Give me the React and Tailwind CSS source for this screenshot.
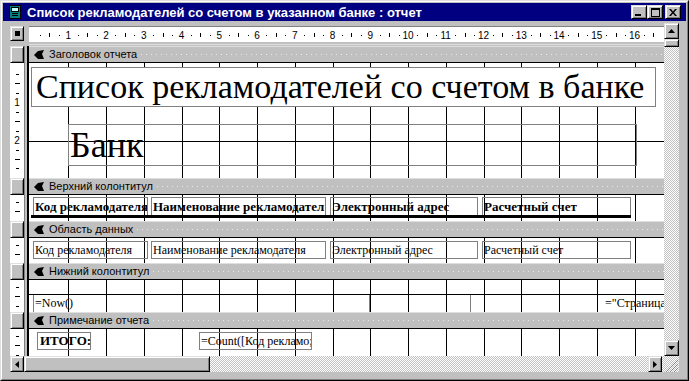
import React from "react";

// 1 cm on the design surface
const CM = 37.75;
const QUARTER = CM / 4;
const CONTENT_W = 635;
const GRID_X = Array.from({ length: 16 }, (_, i) => Math.round(39.25 + CM * i) + 0.5);

const raised =
  "bg-[#c0c0c0] border border-t-[#dfdfdf] border-l-[#dfdfdf] border-r-black border-b-black shadow-[inset_1px_1px_#fff,inset_-1px_-1px_#808080]";
const dither =
  "bg-[image:repeating-conic-gradient(#c0c0c0_0_25%,#ffffff_0_50%)] bg-[length:2px_2px]";
const serif = "font-['Liberation_Serif','Times_New_Roman',serif]";
const sans = "font-['Liberation_Sans',Arial,sans-serif]";

const TopRuler = () => {
  const marks = [];
  for (let n = 1; 1.5 + n * QUARTER < CONTENT_W - 4; n++) {
    const x = 1.5 + n * QUARTER;
    if (n % 4 === 0) {
      marks.push(
        <text key={n} x={x} y="12" fontSize="10" textAnchor="middle" fontFamily="Liberation Sans, Arial, sans-serif">
          {n / 4}
        </text>
      );
    } else if (n % 4 === 2) {
      marks.push(<rect key={n} x={Math.round(x)} y="6" width="1" height="4" fill="#000" />);
    } else {
      marks.push(<rect key={n} x={Math.round(x)} y="8" width="1" height="1" fill="#000" />);
    }
  }
  return (
    <svg width={CONTENT_W} height="15" className="block">
      {marks}
    </svg>
  );
};

const SideRuler = ({ height, offset }) => {
  const marks = [];
  for (let n = 1; offset + n * QUARTER < height - 1; n++) {
    const y = Math.round(offset + n * QUARTER);
    if (n % 4 === 0) {
      marks.push(
        <text key={n} x="7" y={y + 4} fontSize="10" textAnchor="middle" fontFamily="Liberation Sans, Arial, sans-serif">
          {n / 4}
        </text>
      );
    } else if (n % 4 === 2) {
      marks.push(<rect key={n} x="5" y={y} width="5" height="1" fill="#000" />);
    } else {
      marks.push(<rect key={n} x="6" y={y} width="3" height="1" fill="#000" />);
    }
  }
  return (
    <svg width="14" height={height} className="block">
      {marks}
    </svg>
  );
};

const Grid = ({ height, rows = [] }) => (
  <svg width={CONTENT_W} height={height} className="absolute left-0 top-0">
    {GRID_X.map((x) => (
      <line key={x} x1={x} x2={x} y1="0" y2={height} stroke="#000" />
    ))}
    {rows.map((y) => (
      <line key={y} x1="0" x2={CONTENT_W} y1={y + 0.5} y2={y + 0.5} stroke="#000" />
    ))}
  </svg>
);

const SectionIcon = () => (
  <svg width="11" height="10" viewBox="0 0 11 10" className="shrink-0">
    <polygon points="0,5 4,1 10,0 8,4 10,9 4,9" fill="#000" />
  </svg>
);

const Separator = () => (
  <div className="w-[5px] shrink-0 bg-[#c0c0c0] border-l border-l-[#808080] border-r-2 border-r-black" />
);

const SectionBar = ({ title }) => (
  <div className="flex h-[17px] shrink-0">
    <div className={`w-[14px] shrink-0 ${raised}`} />
    <Separator />
    <div className="flex flex-1 items-center gap-[4px] border-t border-t-[#dfdfdf] border-b border-b-black bg-[#c0c0c0] pl-[5px]">
      <SectionIcon />
      <span className={`${sans} text-[11px] leading-none text-black whitespace-nowrap`}>{title}</span>
      <div className="h-px flex-1 bg-[image:repeating-linear-gradient(90deg,#e8e8e8_0_1px,transparent_1px_5px)]" />
    </div>
  </div>
);

const SectionBody = ({ heightClass, height, offset, rows, children }) => (
  <div className={`flex shrink-0 ${heightClass}`}>
    <div className="w-[14px] shrink-0 bg-white">
      <SideRuler height={height} offset={offset} />
    </div>
    <Separator />
    <div className="relative flex-1 overflow-hidden bg-white">
      <Grid height={height} rows={rows} />
      {children}
    </div>
  </div>
);

const TitleButton = ({ children, className = "" }) => (
  <div className={`flex h-[14px] w-[16px] items-center justify-center ${raised} ${className}`}>{children}</div>
);

export default function App() {
  return (
    <div className="h-[381px] w-[689px] overflow-hidden bg-[#c0c0c0] border border-t-[#dfdfdf] border-l-[#dfdfdf] border-r-black border-b-black">
      <div className="flex h-full flex-col border border-t-white border-l-white border-r-[#808080] border-b-[#808080] p-px">
        {/* title bar */}
        <div className="flex h-[18px] shrink-0 items-center bg-[#000080] pl-[5px] pr-[5px]">
          <svg width="14" height="14" viewBox="0 0 14 14" className="shrink-0">
            <rect x="1.5" y="0.5" width="11" height="13" fill="#008080" stroke="#000" />
            <rect x="3.5" y="2.5" width="7" height="4" fill="#c0ffff" stroke="#000" />
            <rect x="4" y="8" width="6" height="1" fill="#000" />
            <rect x="4" y="10" width="6" height="1" fill="#000" />
          </svg>
          <span className={`${sans} ml-[5px] text-[13px] font-bold leading-none text-white whitespace-nowrap`}>
            Список рекламодателей со счетом в указанном банке : отчет
          </span>
          <div className="flex-1" />
          <TitleButton>
            <div className="mt-[6px] mr-[2px] h-[2px] w-[6px] bg-black" />
          </TitleButton>
          <TitleButton>
            <div className="h-[9px] w-[9px] border border-t-2 border-black" />
          </TitleButton>
          <TitleButton className="ml-[2px]">
            <svg width="8" height="7" viewBox="0 0 8 7">
              <path d="M0 0h2l2 2.5L6 0h2L5 3.5 8 7H6L4 4.5 2 7H0l3-3.5z" fill="#000" />
            </svg>
          </TitleButton>
        </div>

        {/* design area */}
        <div className="mx-[7px] mt-[2px] flex flex-col">
          <div className="flex h-[333px]">
            <div className="flex w-[654px] flex-col">
              {/* top ruler */}
              <div className="flex h-[23px] shrink-0">
                <div className="w-[19px] shrink-0 pt-[3px]">
                  <div className={`flex h-[15px] w-[14px] items-center justify-center ${raised}`}>
                    <div className="h-[5px] w-[5px] bg-black" />
                  </div>
                </div>
                <div className="flex-1 pt-[3px]">
                  <div className="h-[16px] border-t border-t-[#808080] bg-white">
                    <TopRuler />
                  </div>
                  <div className="mt-[2px] h-px bg-[#dfdfdf]" />
                </div>
              </div>

              <SectionBar title="Заголовок отчета" />
              <SectionBody heightClass="h-[115px]" height={115} offset={1.6} rows={[78]}>
                <div className={`absolute left-[2px] top-[4px] flex h-[40px] w-[625px] items-center border border-[#808080] bg-white pl-[4px] ${serif} text-[34px] leading-none text-black whitespace-nowrap`}>
                  Список рекламодателей со счетом в банке
                </div>
                <div className={`absolute left-[39px] top-[61px] flex h-[42px] w-[569px] items-center border border-[#808080] pl-px ${serif} text-[36px] leading-none text-black whitespace-nowrap`}>
                  Банк
                </div>
              </SectionBody>

              <SectionBar title="Верхний колонтитул" />
              <SectionBody heightClass="h-[26px]" height={26} offset={-2.4}>
                {[
                  ["left-[4px] w-[115px]", "Код рекламодателя"],
                  ["left-[122px] w-[175px]", "Наименование рекламодател"],
                  ["left-[301px] w-[148px]", "Электронный адрес"],
                  ["left-[453px] w-[149px]", "Расчетный счет"],
                ].map(([pos, text]) => (
                  <div
                    key={text}
                    className={`absolute top-[2px] h-[19px] ${pos} overflow-hidden border border-[#808080] pl-px pt-px ${serif} text-[13px] font-bold leading-[16px] text-black whitespace-nowrap`}
                  >
                    {text}
                  </div>
                ))}
                <div className="absolute left-[2px] top-[20px] h-[3px] w-[600px] bg-black" />
              </SectionBody>

              <SectionBar title="Область данных" />
              <SectionBody heightClass="h-[25px]" height={25} offset={-2.4}>
                {[
                  ["left-[4px] w-[115px]", "Код рекламодателя"],
                  ["left-[122px] w-[175px]", "Наименование рекламодателя"],
                  ["left-[301px] w-[148px]", "Электронный адрес"],
                  ["left-[453px] w-[149px]", "Расчетный счет"],
                ].map(([pos, text]) => (
                  <div
                    key={text}
                    className={`absolute top-[3px] h-[18px] ${pos} overflow-hidden border border-[#808080] pl-px ${serif} text-[12px] leading-[16px] text-black whitespace-nowrap`}
                  >
                    {text}
                  </div>
                ))}
              </SectionBody>

              <SectionBar title="Нижний колонтитул" />
              <SectionBody heightClass="h-[32px]" height={32} offset={-2.4} rows={[14]}>
                <div className={`absolute left-[4px] top-[15px] h-[18px] w-[337px] border-x border-[#808080] pl-px ${serif} text-[12px] leading-[16px] text-black whitespace-nowrap`}>
                  =Now()
                </div>
                <div className="absolute left-[441px] top-[15px] h-[18px] w-[250px] border-l border-[#808080]" />
                <div className={`absolute left-[576px] top-[15px] ${serif} text-[12px] leading-[16px] text-black whitespace-nowrap`}>
                  ="Страница
                </div>
              </SectionBody>

              <SectionBar title="Примечание отчета" />
              <SectionBody heightClass="h-[27px]" height={27} offset={-2.4}>
                <div className={`absolute left-[8px] top-[3px] h-[18px] w-[54px] border border-[#808080] pl-[2px] ${serif} text-[13px] font-bold leading-[16px] text-black whitespace-nowrap`}>
                  ИТОГО:
                </div>
                <div className={`absolute left-[170px] top-[3px] h-[18px] w-[113px] overflow-hidden border border-[#808080] pl-px ${serif} text-[12px] leading-[16px] text-black whitespace-nowrap`}>
                  =Count([Код рекламо;
                </div>
              </SectionBody>
            </div>

            {/* vertical scrollbar */}
            <div className="flex w-[17px] flex-col">
              <div className={`flex h-[16px] shrink-0 items-center justify-center ${raised}`}>
                <svg width="7" height="4" viewBox="0 0 7 4">
                  <path d="M3.5 0L7 4H0z" fill="#000" />
                </svg>
              </div>
              <div className={`h-[8px] shrink-0 ${raised}`} />
              <div className={`flex-1 ${dither}`} />
              <div className={`flex h-[16px] shrink-0 items-center justify-center ${raised}`}>
                <svg width="7" height="4" viewBox="0 0 7 4">
                  <path d="M0 0H7L3.5 4z" fill="#000" />
                </svg>
              </div>
            </div>
          </div>

          {/* horizontal scrollbar */}
          <div className="flex h-[16px]">
            <div className={`flex w-[14px] shrink-0 items-center justify-center ${raised}`}>
              <svg width="4" height="7" viewBox="0 0 4 7">
                <path d="M0 3.5L4 0V7z" fill="#000" />
              </svg>
            </div>
            <div className={`w-[186px] shrink-0 ${raised}`} />
            <div className={`flex-1 ${dither}`} />
            <div className={`flex w-[14px] shrink-0 items-center justify-center ${raised}`}>
              <svg width="4" height="7" viewBox="0 0 4 7">
                <path d="M4 3.5L0 0V7z" fill="#000" />
              </svg>
            </div>
            <div className={`relative w-[17px] shrink-0 ${dither}`}>
              <svg width="17" height="16" className="absolute left-0 top-0">
                <path d="M16 4L4 16M16 8L8 16M16 12L12 16" stroke="#808080" />
                <path d="M16 5L5 16M16 9L9 16M16 13L13 16" stroke="#fff" />
              </svg>
            </div>
          </div>
        </div>
      </div>
    </div>
  );
}
